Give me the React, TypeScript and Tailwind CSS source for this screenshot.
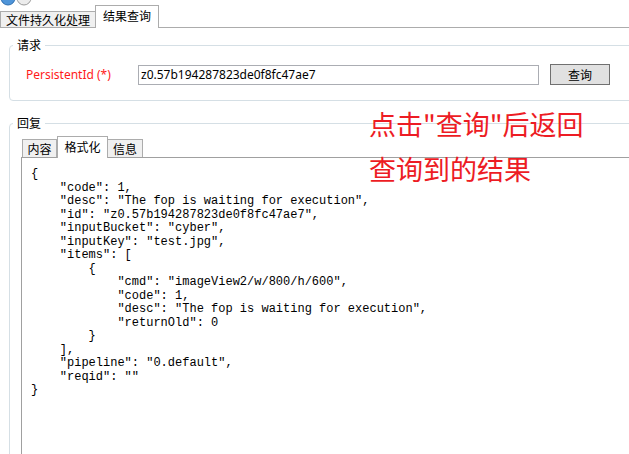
const jsonLines = [
  '{',
  '    "code": 1,',
  '    "desc": "The fop is waiting for execution",',
  '    "id": "z0.57b194287823de0f8fc47ae7",',
  '    "inputBucket": "cyber",',
  '    "inputKey": "test.jpg",',
  '    "items": [',
  '        {',
  '            "cmd": "imageView2/w/800/h/600",',
  '            "code": 1,',
  '            "desc": "The fop is waiting for execution",',
  '            "returnOld": 0',
  '        }',
  '    ],',
  '    "pipeline": "0.default",',
  '    "reqid": ""',
  '}',
]

function TopIcons() {
  return (
    <svg className="absolute left-0 top-0" width="40" height="6" viewBox="0 0 40 6">
      <circle cx="8" cy="-2" r="7" fill="#4f95d9" stroke="#2f6fb0" strokeWidth="1" />
      <circle cx="24" cy="-2" r="7" fill="#ececec" stroke="#9a9a9a" strokeWidth="1" />
    </svg>
  )
}

export default function App() {
  return (
    <div className="relative w-[629px] h-[454px] overflow-hidden bg-white text-black font-['Noto_Sans_CJK_SC',sans-serif]">
      <TopIcons />
      <div className="h-[5px]" />

      {/* main tab strip */}
      <div className="flex items-end h-[23px] border-b border-[#acacac]">
        <div className="w-[96px] h-[16px] border border-b-0 border-[#acacac] bg-[#f0f0f0] flex items-center justify-center text-[12px] leading-none">
          文件持久化处理
        </div>
        <div className="-ml-px -mb-px w-[64px] h-[23px] border border-b-0 border-[#acacac] bg-white flex items-center justify-center text-[12px] leading-none pb-[2px]">
          结果查询
        </div>
      </div>

      <div className="pl-[9px]">
        {/* 请求 */}
        <div className="relative mt-[17px] w-[640px] h-[56px] border border-[#d5dfe5] rounded-[4px] pt-[18px] pl-[16px]">
          <span className="absolute -top-[9px] left-[3px] px-[4px] bg-white text-[12px] leading-[16px]">请求</span>
          <div className="flex items-center h-[21px]">
            <div className="w-[112px] text-[12px] text-[#ff1a1a] font-['Noto_Sans',sans-serif]">PersistentId (*)</div>
            <div className="w-[401px] h-[20px] border border-[#abadb3] flex items-center px-[2px] text-[12px] font-['Noto_Sans',sans-serif]">
              z0.57b194287823de0f8fc47ae7
            </div>
            <button className="ml-[11px] w-[60px] h-[21px] border border-[#707070] bg-[#e1e1e1] text-[12px] leading-none">
              查询
            </button>
          </div>
        </div>

        {/* 回复 */}
        <div className="relative mt-[22px] w-[640px] h-[420px] border border-[#d5dfe5] rounded-[4px] pt-[12px] pl-[11px] flex flex-col">
          <span className="absolute -top-[9px] left-[3px] px-[4px] bg-white text-[12px] leading-[16px]">回复</span>
          <div className="flex items-end h-[21px] pl-[1px]">
            <div className="w-[35px] h-[18px] border border-b-0 border-[#acacac] bg-[#f0f0f0] flex items-center justify-center text-[12px] leading-none">
              内容
            </div>
            <div className="relative z-10 -mb-px w-[51px] h-[22px] border border-b-0 border-[#acacac] bg-white flex items-center justify-center text-[12px] leading-none pb-[2px]">
              格式化
            </div>
            <div className="-ml-px w-[36px] h-[18px] border border-b-0 border-[#acacac] bg-[#f0f0f0] flex items-center justify-center text-[12px] leading-none">
              信息
            </div>
          </div>
          <div className="flex-1 border-l border-t border-[#a0a0a0] pt-[10px] pl-[9px]">
            <div className="flex flex-col items-start font-['Liberation_Mono',monospace] text-[12px] leading-[13.5px] text-black">
              {jsonLines.map((line, i) => (
                <div key={i} className="whitespace-pre">{line}</div>
              ))}
            </div>
          </div>
        </div>
      </div>

      {/* annotation */}
      <div className="absolute left-[369px] top-[109px] flex flex-col gap-[15px] text-[27px] leading-[30px] text-[#ed1c24] font-['Noto_Sans_CJK_SC',sans-serif]">
        <div>点击"查询"后返回</div>
        <div>查询到的结果</div>
      </div>
    </div>
  )
}
